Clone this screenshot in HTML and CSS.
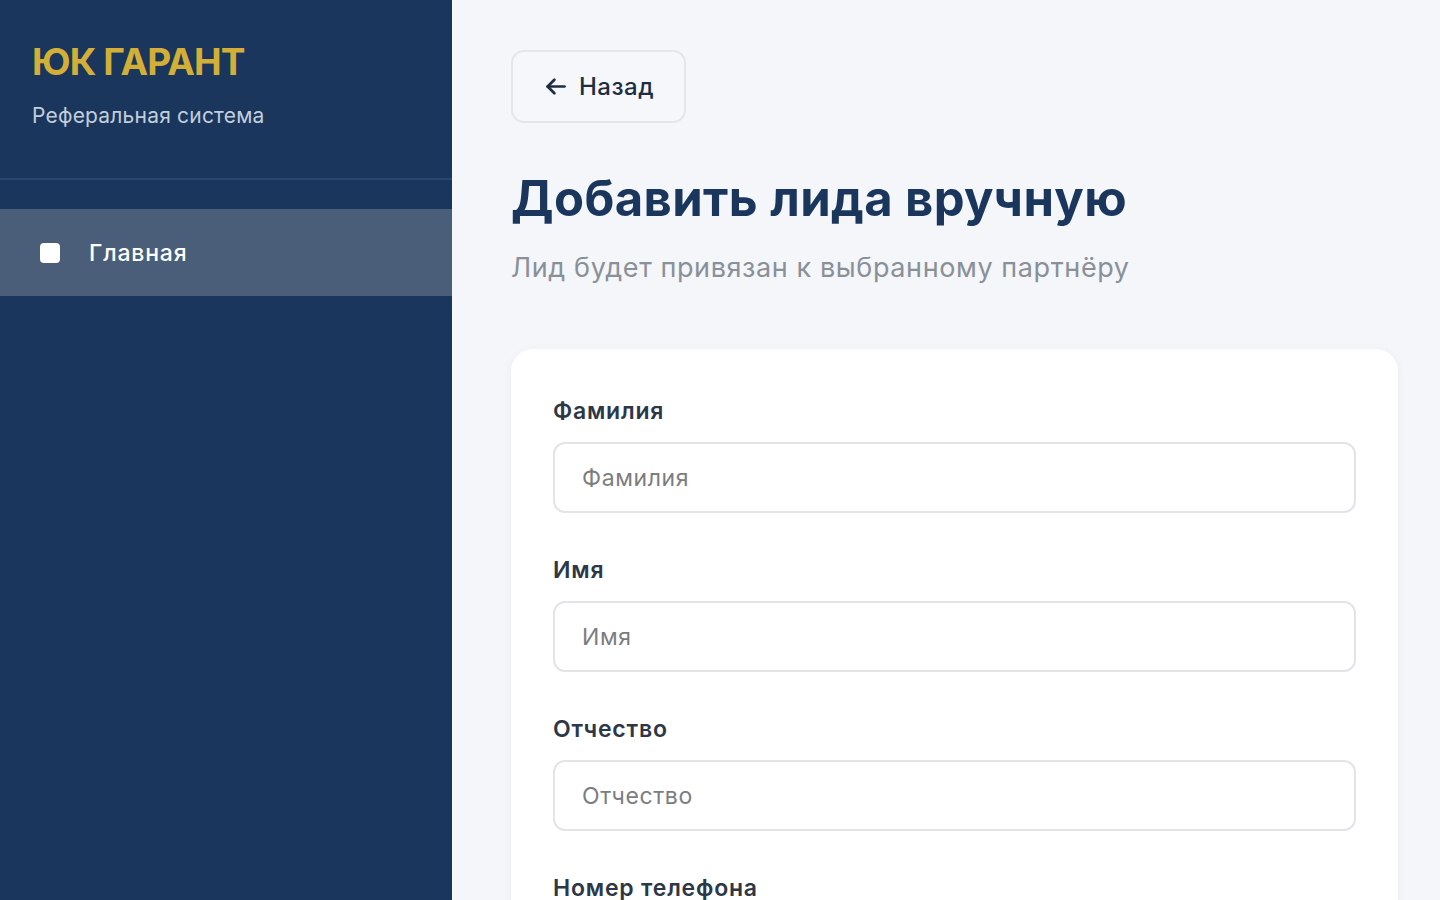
FILE: index.html
```html
<!DOCTYPE html>
<html lang="ru">
<head>
<meta charset="utf-8">
<title>Добавить лида вручную</title>
<link rel="stylesheet" href="styles.css">
</head>
<body>
<div class="app">
  <aside class="sidebar">
    <div class="brand">
      <div class="brand-name">ЮК ГАРАНТ</div>
      <div class="brand-sub">Реферальная система</div>
    </div>
    <nav class="nav">
      <a class="nav-item active" href="#">
        <span class="nav-icon"></span>
        <span class="nav-label">Главная</span>
      </a>
    </nav>
  </aside>
  <main class="main">
    <button class="back-btn" type="button">
      <svg class="back-icon" viewBox="0 0 24 24" width="27" height="27" fill="none" stroke="currentColor" stroke-width="2.4" stroke-linecap="round" stroke-linejoin="round"><path d="M20 12H5"/><path d="M11 6l-6 6 6 6"/></svg>
      <span>Назад</span>
    </button>
    <h1 class="title">Добавить лида вручную</h1>
    <p class="subtitle">Лид будет привязан к выбранному партнёру</p>
    <form class="card">
      <div class="field">
        <label class="label">Фамилия</label>
        <input class="input" type="text" placeholder="Фамилия">
      </div>
      <div class="field">
        <label class="label">Имя</label>
        <input class="input" type="text" placeholder="Имя">
      </div>
      <div class="field">
        <label class="label">Отчество</label>
        <input class="input" type="text" placeholder="Отчество">
      </div>
      <div class="field">
        <label class="label">Номер телефона</label>
        <input class="input" type="text" placeholder="+7 (___) ___-__-__">
      </div>
    </form>
  </main>
</div>
</body>
</html>
```

FILE: styles.css
```css
* { box-sizing: border-box; }
html, body { margin: 0; padding: 0; height: 100%; overflow: hidden; }
body {
  font-family: Inter, "Noto Sans", sans-serif;
  background: #f4f6fa;
  color: #1a365d;
}
.app { display: flex; height: 900px; overflow: hidden; }
.sidebar {
  width: 452px;
  flex: none;
  background: #1a365d;
  display: flex;
  flex-direction: column;
}
.brand {
  padding: 38px 32px 0;
  height: 180px;
  flex: none;
  border-bottom: 2px solid #2a4670;
}
.brand-name {
  font-size: 37px;
  font-weight: 700;
  color: #d4af37;
  line-height: 48px;
  letter-spacing: -0.9px;
}
.brand-sub {
  margin-top: 16px;
  font-size: 21px;
  color: #c3cedb;
  line-height: 28px;
  letter-spacing: 0.2px;
}
.nav { padding-top: 29px; }
.nav-item {
  display: flex;
  align-items: center;
  height: 87px;
  padding-left: 40px;
  text-decoration: none;
  color: #ffffff;
}
.nav-item.active { background: #4a5e7a; }
.nav-icon {
  width: 20px;
  height: 20px;
  background: #ffffff;
  border-radius: 4px;
  margin-right: 29px;
}
.nav-label { font-size: 23px; font-weight: 500; letter-spacing: 0.8px; }
.main {
  flex: 1;
  padding: 50px 42px 0 59px;
  display: flex;
  flex-direction: column;
  align-items: flex-start;
}
.main > * { flex: none; }
.back-btn {
  display: flex;
  align-items: center;
  gap: 10px;
  height: 73px;
  padding: 0 30px 0 29px;
  background: #f5f7fa;
  border: 2px solid #e3e6eb;
  border-radius: 13px;
  font-family: inherit;
  font-size: 24px;
  font-weight: 500;
  letter-spacing: 0.5px;
  color: #1e2d42;
}
.back-icon { color: #1e2d42; }
.title {
  margin: 46px 0 0;
  font-size: 49px;
  font-weight: 700;
  line-height: 60px;
  color: #1a365d;
  letter-spacing: 0.4px;
}
.subtitle {
  margin: 21px 0 0;
  font-size: 27px;
  line-height: 36px;
  color: #8a9098;
  letter-spacing: 0.6px;
}
.card {
  align-self: stretch;
  margin-top: 63px;
  background: #ffffff;
  border-radius: 22px;
  box-shadow: 0 2px 10px rgba(20, 40, 80, 0.05);
  padding: 47px 42px 40px;
  display: flex;
  flex-direction: column;
  gap: 42px;
}
.field { display: flex; flex-direction: column; gap: 16px; }
.label {
  font-size: 23px;
  font-weight: 600;
  line-height: 30px;
  color: #2d3748;
  letter-spacing: 0.8px;
}
.input {
  height: 71px;
  border: 2px solid #e2e4e7;
  border-radius: 12px;
  padding: 0 27px;
  font-family: inherit;
  font-size: 23px;
  letter-spacing: 0.6px;
  color: #2d3748;
  background: #ffffff;
  outline: none;
}
.input::placeholder { color: #7b7d80; }
```
